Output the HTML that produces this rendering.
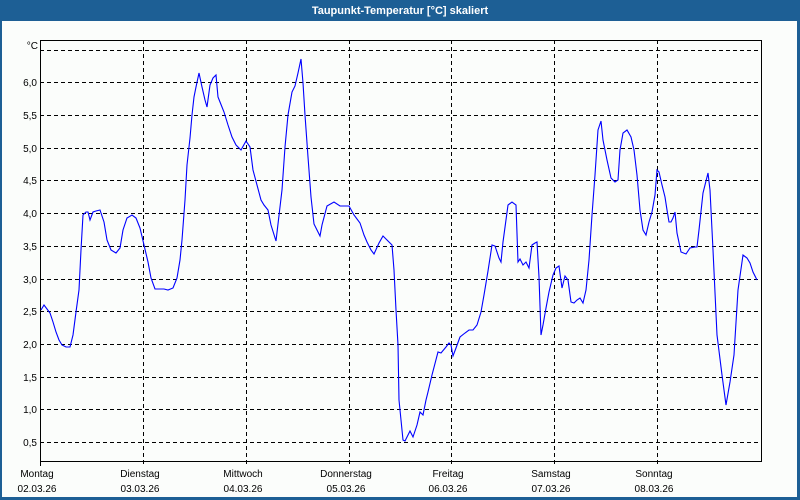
<!DOCTYPE html>
<html><head><meta charset="utf-8"><style>
body{margin:0;width:800px;height:500px;overflow:hidden;background:#1d5f95;font-family:"Liberation Sans",sans-serif;}
</style></head><body>
<svg width="800" height="500" xmlns="http://www.w3.org/2000/svg" style="display:block">
<rect x="0" y="0" width="800" height="500" fill="#1d5f95"/>
<rect x="2" y="21" width="795" height="476" fill="#fbfdfb"/>
<text x="400" y="14" fill="#fff" font-size="11" font-weight="bold" text-anchor="middle" font-family="Liberation Sans, sans-serif">Taupunkt-Temperatur [°C] skaliert</text>
<g stroke="#000" stroke-width="1" stroke-dasharray="4,3" fill="none" shape-rendering="crispEdges">
<line x1="40" y1="50.5" x2="761" y2="50.5"/>
<line x1="40" y1="82.5" x2="761" y2="82.5"/>
<line x1="40" y1="115.5" x2="761" y2="115.5"/>
<line x1="40" y1="148.5" x2="761" y2="148.5"/>
<line x1="40" y1="180.5" x2="761" y2="180.5"/>
<line x1="40" y1="213.5" x2="761" y2="213.5"/>
<line x1="40" y1="246.5" x2="761" y2="246.5"/>
<line x1="40" y1="279.5" x2="761" y2="279.5"/>
<line x1="40" y1="311.5" x2="761" y2="311.5"/>
<line x1="40" y1="344.5" x2="761" y2="344.5"/>
<line x1="40" y1="377.5" x2="761" y2="377.5"/>
<line x1="40" y1="409.5" x2="761" y2="409.5"/>
<line x1="40" y1="442.5" x2="761" y2="442.5"/>
<line x1="143.5" y1="40" x2="143.5" y2="466"/>
<line x1="246.5" y1="40" x2="246.5" y2="466"/>
<line x1="349.5" y1="40" x2="349.5" y2="466"/>
<line x1="451.5" y1="40" x2="451.5" y2="466"/>
<line x1="554.5" y1="40" x2="554.5" y2="466"/>
<line x1="657.5" y1="40" x2="657.5" y2="466"/>
</g>
<path d="M40.5 40.5H761.5V461.5H40.5Z" fill="none" stroke="#000" stroke-width="1" shape-rendering="crispEdges"/>
<line x1="40.5" y1="461" x2="40.5" y2="466" stroke="#000" shape-rendering="crispEdges"/>
<polyline fill="none" stroke="#0000ff" stroke-width="1.1" points="41,310 44,305 47,309 50,313 53,322 56,332 59,340 62,345 66,347 70,347 73,335 76,312 79,290 81,250 83,215 86,212 88,212 90,220 93,212 96,211 100,210 104,222 107,240 111,250 116,253 120,248 123,230 127,218 132,215 136,218 140,228 144,245 148,262 151,278 155,289 160,289 164,289 168,290 173,288 177,278 180,260 182,240 185,200 187,165 190,138 192,115 194,97 196,87 199,73 202,87 205,100 207,107 210,85 213,78 216,75 218,97 220,102 224,112 228,125 232,137 236,145 241,150 246,141 250,147 253,170 257,185 261,200 264,205 268,210 271,225 276,241 282,190 285,147 288,115 292,92 295,86 298,73 301,59 303,83 305,115 308,157 311,197 314,224 320,236 322,225 327,206 334,202 340,206 349,206 354,215 360,223 364,235 367,242 371,250 374,254 379,243 383,236 387,240 392,245 394,270 396,310 398,345 399,400 401,420 403,440 405,441 408,435 410,431 413,437 417,425 420,412 423,415 426,400 428,392 432,375 438,352 441,353 446,347 449,343 451,345 453,356 456,348 460,337 465,333 469,330 473,330 477,325 481,312 484,295 488,271 492,245 495,246 499,258 501,262 503,242 508,205 512,202 516,205 518,262 520,259 523,265 526,262 529,268 532,245 535,243 537,242 539,277 541,335 543,325 546,308 549,292 553,275 556,268 559,266 562,288 565,276 568,280 571,302 574,303 577,300 580,298 583,303 586,290 589,260 592,215 595,175 598,130 601,121 603,140 607,160 611,178 615,182 618,180 620,150 623,133 627,130 631,137 634,150 637,175 640,210 643,230 646,235 649,222 652,212 655,195 657,170 659,172 662,185 665,197 667,210 669,222 671,222 673,218 675,212 677,233 681,252 686,254 690,248 695,247 697,247 699,230 703,193 708,173 710,190 713,250 717,335 722,375 726,405 730,382 734,355 738,290 743,255 747,258 750,263 753,272 757,280"/>
<g font-size="10" fill="#000" text-anchor="end" font-family="Liberation Sans, sans-serif">
<text x="38" y="49">°C</text>
<text x="37" y="86">6,0</text>
<text x="37" y="119">5,5</text>
<text x="37" y="152">5,0</text>
<text x="37" y="184">4,5</text>
<text x="37" y="217">4,0</text>
<text x="37" y="250">3,5</text>
<text x="37" y="283">3,0</text>
<text x="37" y="315">2,5</text>
<text x="37" y="348">2,0</text>
<text x="37" y="381">1,5</text>
<text x="37" y="413">1,0</text>
<text x="37" y="446">0,5</text>
</g>
<g font-size="10" fill="#000" text-anchor="middle" font-family="Liberation Sans, sans-serif">
<text x="37" y="477">Montag</text><text x="37" y="492">02.03.26</text>
<text x="140" y="477">Dienstag</text><text x="140" y="492">03.03.26</text>
<text x="243" y="477">Mittwoch</text><text x="243" y="492">04.03.26</text>
<text x="346" y="477">Donnerstag</text><text x="346" y="492">05.03.26</text>
<text x="448" y="477">Freitag</text><text x="448" y="492">06.03.26</text>
<text x="551" y="477">Samstag</text><text x="551" y="492">07.03.26</text>
<text x="654" y="477">Sonntag</text><text x="654" y="492">08.03.26</text>
</g>
</svg>
</body></html>
